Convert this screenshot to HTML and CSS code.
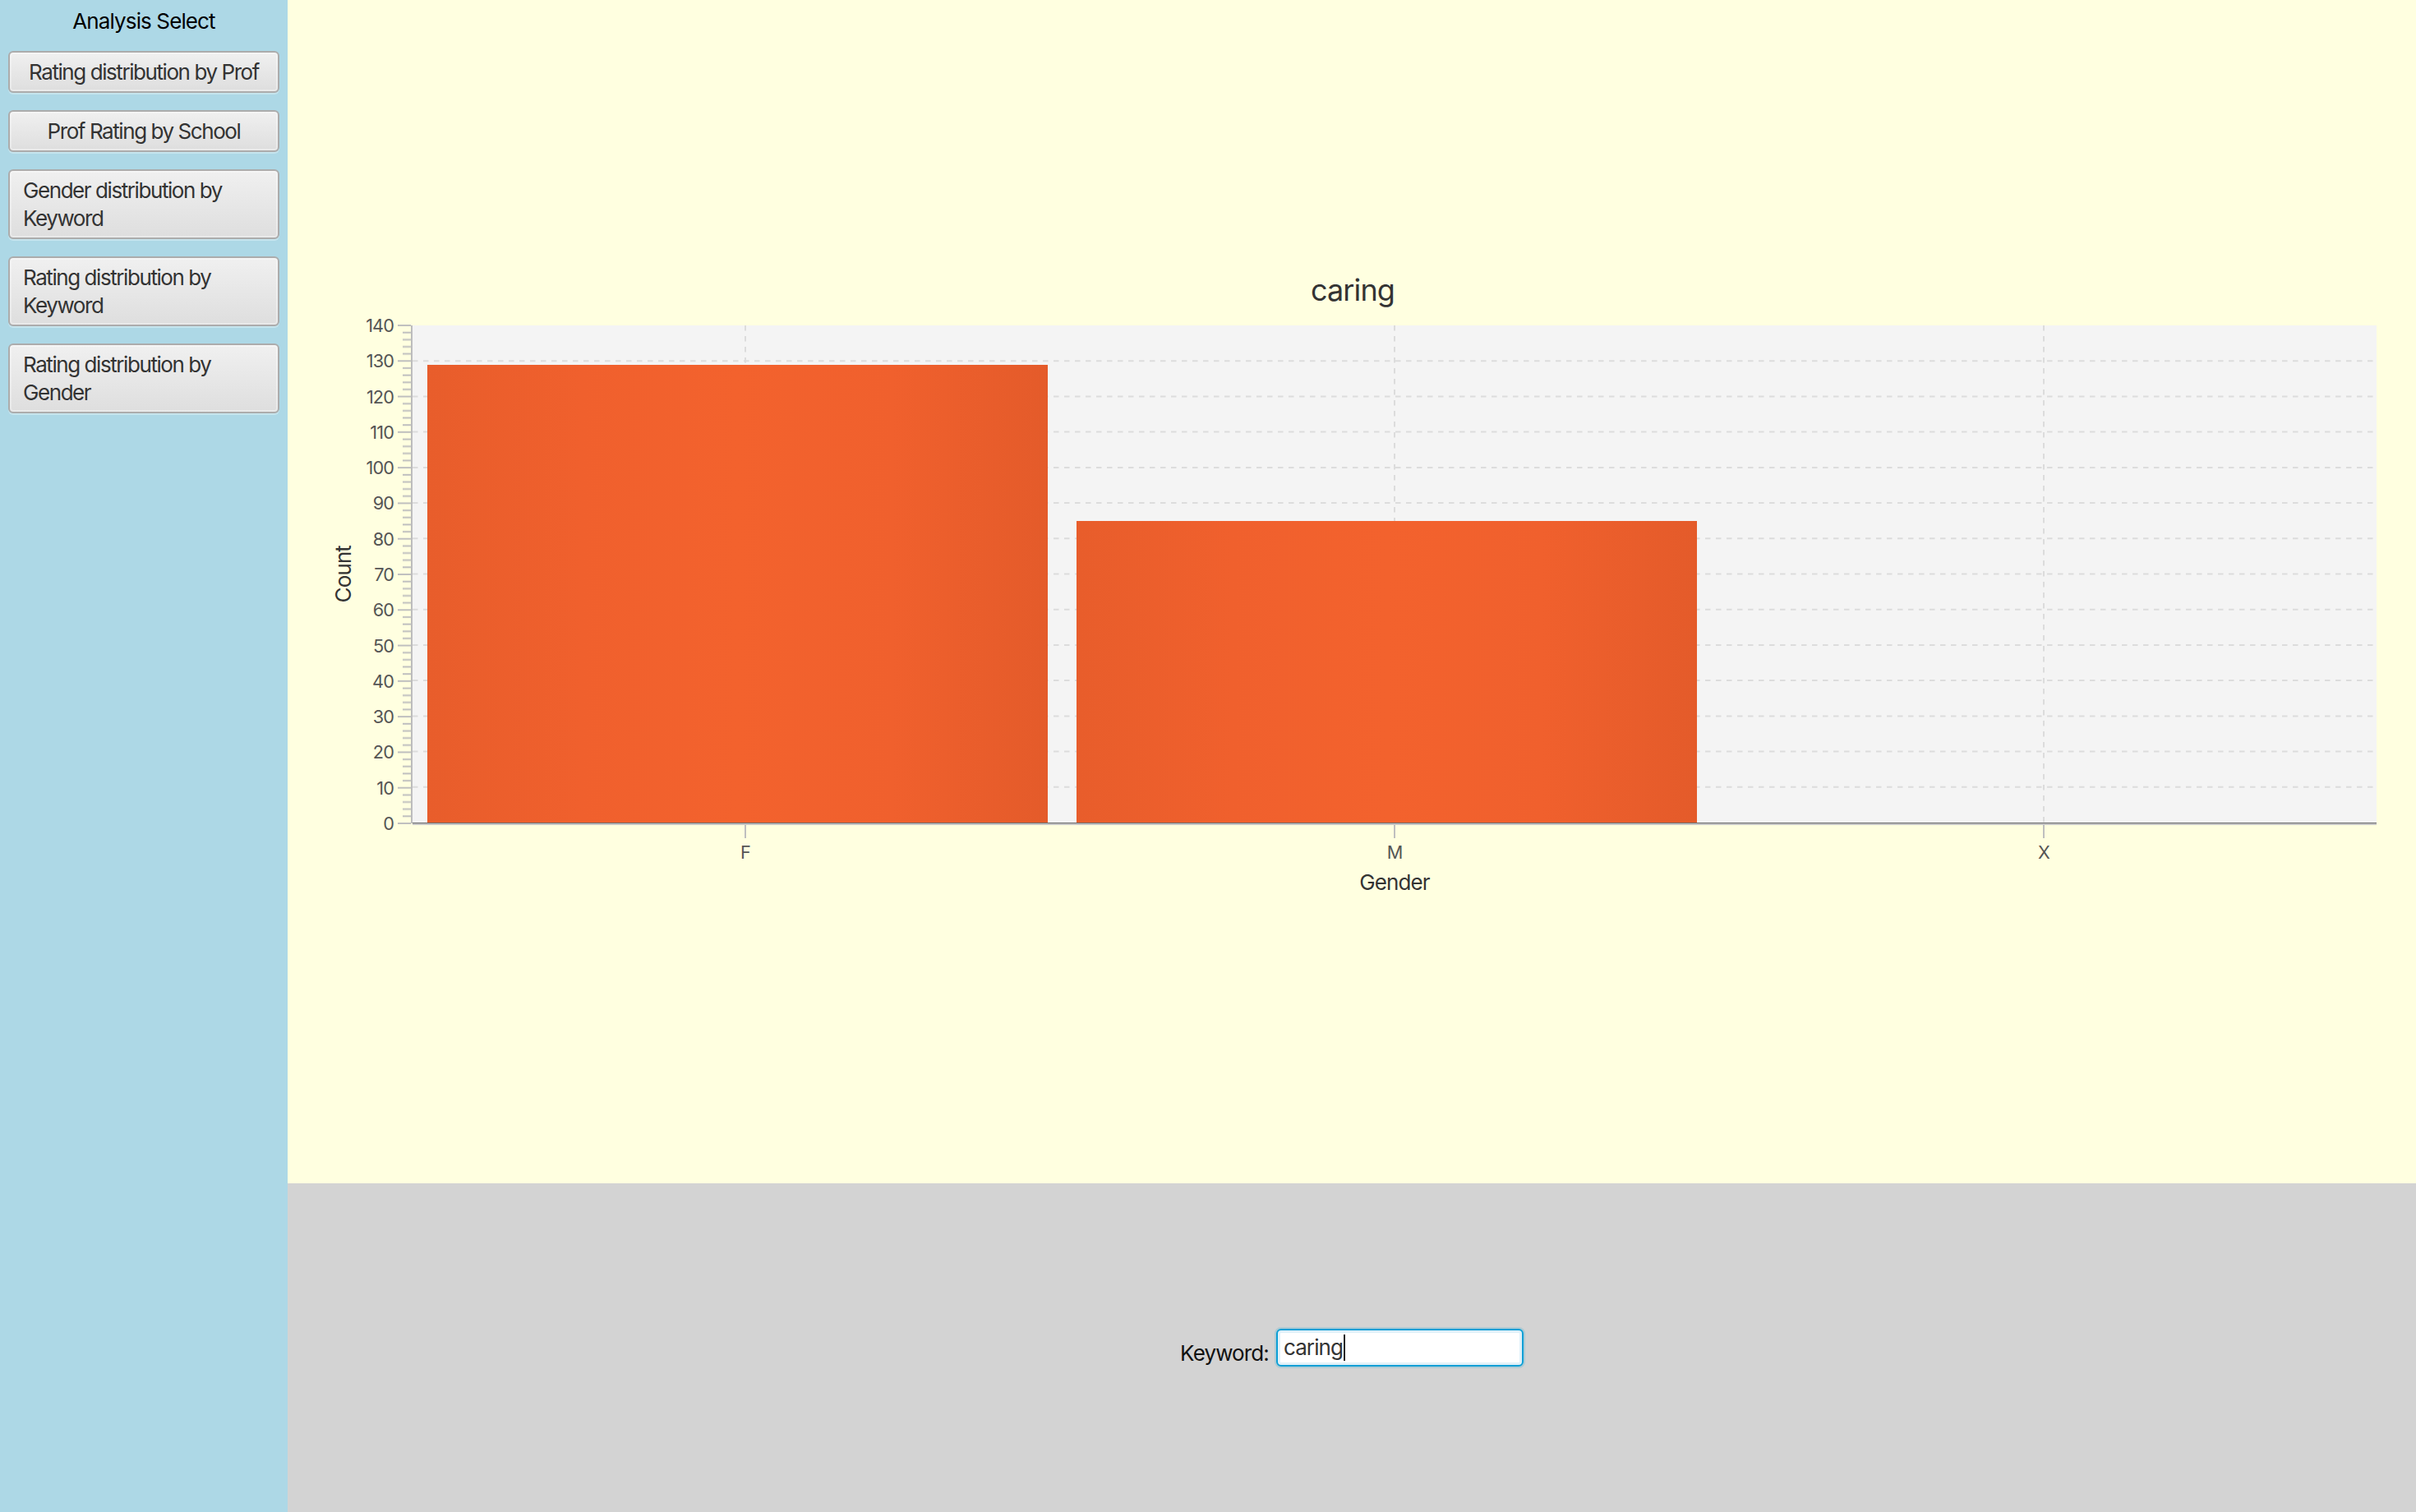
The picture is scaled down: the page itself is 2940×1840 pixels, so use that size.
FILE: index.html
```html
<!DOCTYPE html>
<html lang="en">
<head>
<meta charset="utf-8">
<title>Analysis</title>
<link rel="stylesheet" href="styles.css">
</head>
<body>
<div class="app">
  <aside class="sidebar">
    <div class="sidebar-title">Analysis Select</div>
    <button class="btn center">Rating distribution by Prof</button>
    <button class="btn center">Prof Rating by School</button>
    <button class="btn">Gender distribution by<br>Keyword</button>
    <button class="btn">Rating distribution by<br>Keyword</button>
    <button class="btn">Rating distribution by<br>Gender</button>
  </aside>

  <main class="chart-pane">
    <div class="chart">
      <div class="chart-title">caring</div>
      <div class="chart-body">
        <div class="y-title"><span>Count</span></div>
        <div class="y-labels">
          <span>140</span><span>130</span><span>120</span><span>110</span><span>100</span>
          <span>90</span><span>80</span><span>70</span><span>60</span><span>50</span>
          <span>40</span><span>30</span><span>20</span><span>10</span><span>0</span>
        </div>
        <svg class="y-ticks" viewBox="0 0 23 606" width="23" height="606">
          <defs>
            <pattern id="yt" patternUnits="userSpaceOnUse" x="0" y="-1" width="23" height="43.2857">
              <rect x="5" y="0" width="16" height="2" fill="#bfbfbf"/>
              <rect x="11" y="8.657" width="10" height="2" fill="#bfbfbf"/>
              <rect x="11" y="17.314" width="10" height="2" fill="#bfbfbf"/>
              <rect x="11" y="25.971" width="10" height="2" fill="#bfbfbf"/>
              <rect x="11" y="34.629" width="10" height="2" fill="#bfbfbf"/>
            </pattern>
          </defs>
          <rect x="0" y="-1" width="23" height="608" fill="url(#yt)"/>
          <rect x="21" y="0" width="2" height="606" fill="#bdbdbd"/>
        </svg>
        <div class="plot">
          <svg class="grid" viewBox="0 0 2390 605" preserveAspectRatio="none">
            <g stroke="#dcdcdc" stroke-width="2" stroke-dasharray="6.5 6.5" fill="none">
              <line x1="0" y1="561.8" x2="2390" y2="561.8"/>
              <line x1="0" y1="518.6" x2="2390" y2="518.6"/>
              <line x1="0" y1="475.4" x2="2390" y2="475.4"/>
              <line x1="0" y1="432.1" x2="2390" y2="432.1"/>
              <line x1="0" y1="388.9" x2="2390" y2="388.9"/>
              <line x1="0" y1="345.7" x2="2390" y2="345.7"/>
              <line x1="0" y1="302.5" x2="2390" y2="302.5"/>
              <line x1="0" y1="259.3" x2="2390" y2="259.3"/>
              <line x1="0" y1="216.1" x2="2390" y2="216.1"/>
              <line x1="0" y1="172.9" x2="2390" y2="172.9"/>
              <line x1="0" y1="129.6" x2="2390" y2="129.6"/>
              <line x1="0" y1="86.4" x2="2390" y2="86.4"/>
              <line x1="0" y1="43.2" x2="2390" y2="43.2"/>
              <line x1="405" y1="0" x2="405" y2="605"/>
              <line x1="1195" y1="0" x2="1195" y2="605"/>
              <line x1="1985" y1="0" x2="1985" y2="605"/>
            </g>
          </svg>
          <div class="bars">
            <div class="slot"><div class="bar" style="height:92.14%"></div></div>
            <div class="slot"><div class="bar" style="height:60.71%"></div></div>
            <div class="slot"></div>
          </div>
        </div>
        <div class="x-axis">
          <div class="x-cat">F</div>
          <div class="x-cat">M</div>
          <div class="x-cat">X</div>
        </div>
        <div class="x-title">Gender</div>
      </div>
    </div>
  </main>

  <section class="controls">
    <span class="kw-label">Keyword:</span>
    <div class="field"><span class="field-text">caring</span><span class="caret"></span></div>
  </section>
</div>
</body>
</html>
```

FILE: styles.css
```css
html, body {
  margin: 0;
  padding: 0;
}

body {
  width: 2940px;
  height: 1840px;
  overflow: hidden;
  font-family: Inter, "Noto Sans", "Liberation Sans", sans-serif;
  letter-spacing: -0.055em;
}

.app {
  display: grid;
  grid-template-columns: 350px 1fr;
  grid-template-rows: 1440px 400px;
  width: 2940px;
  height: 1840px;
}

/* ---------- sidebar ---------- */
.sidebar {
  grid-row: 1 / 3;
  grid-column: 1;
  background: #add8e6;
  padding: 11px 10px 0;
  display: flex;
  flex-direction: column;
  gap: 21px;
  box-sizing: border-box;
}

.sidebar-title {
  font-size: 26px;
  line-height: 30px;
  text-align: center;
  color: #000;
}

.btn {
  font-family: inherit;
  font-size: 26px;
  letter-spacing: -0.055em;
  line-height: 34px;
  color: #333;
  text-align: left;
  width: 100%;
  box-sizing: border-box;
  padding: 6.5px 16px;
  margin: 0;
  border: 2px solid #acacac;
  border-radius: 6px;
  background: linear-gradient(to bottom, #f0f0f0, #dedede);
  box-shadow: inset 0 0 0 2px rgba(255, 255, 255, 0.35), 0 2px 0 rgba(255, 255, 255, 0.3);
}

.btn.center {
  text-align: center;
  white-space: nowrap;
}

/* ---------- chart ---------- */
.chart-pane {
  grid-row: 1;
  grid-column: 2;
  background: #ffffe0;
  padding: 331px 48px 0 50px;
  box-sizing: border-box;
}

.chart-title {
  text-align: center;
  font-size: 36px;
  line-height: 44px;
  color: #333;
  margin-bottom: 21px;
}

.chart-body {
  display: grid;
  grid-template-columns: 36px 43px 23px 1fr;
  grid-template-rows: 606px auto auto;
}

.y-title {
  grid-row: 1;
  grid-column: 1;
  display: flex;
  align-items: center;
  justify-content: center;
}

.y-title span {
  writing-mode: vertical-rl;
  transform: rotate(180deg);
  font-size: 26px;
  line-height: 30px;
  color: #333;
}

.y-labels {
  grid-row: 1;
  grid-column: 2;
  display: flex;
  flex-direction: column;
  justify-content: space-between;
  margin: -13px 0;
  text-align: right;
  font-size: 21.7px;
  line-height: 26px;
  color: #555;
}

.y-ticks {
  grid-row: 1;
  grid-column: 3;
  display: block;
  overflow: visible;
}

.plot {
  grid-row: 1;
  grid-column: 4;
  position: relative;
  background: #f4f4f4;
  border-bottom: 1px solid #6e6e6e;
  box-sizing: border-box;
}

.grid {
  position: absolute;
  left: 0;
  top: 0;
  width: 100%;
  height: 100%;
}

.bars {
  position: relative;
  display: flex;
  height: 100%;
  padding: 0 10px;
  box-sizing: border-box;
}

.slot {
  flex: 1;
  display: flex;
  align-items: flex-end;
  padding-left: 8px;
}

.bar {
  width: 755px;
  background: linear-gradient(to right, #e85d2b 0%, #f0602d 25%, #f3622d 50%, #f0602d 75%, #e45b2a 100%);
}

.x-axis {
  grid-row: 2;
  grid-column: 4;
  display: flex;
  padding: 0 10px;
  border-top: 2px solid #c4c4c4;
}

.x-cat {
  flex: 1;
  text-align: center;
  font-size: 21.7px;
  line-height: 26px;
  color: #555;
  padding-top: 20px;
  background: linear-gradient(#bfbfbf, #bfbfbf) center top / 2px 16px no-repeat;
}

.x-title {
  grid-row: 3;
  grid-column: 4;
  text-align: center;
  font-size: 26px;
  line-height: 30px;
  color: #333;
  margin-top: 9px;
}

/* ---------- controls ---------- */
.controls {
  grid-row: 2;
  grid-column: 2;
  background: #d3d3d3;
  display: flex;
  align-items: center;
  justify-content: center;
  gap: 9px;
}

.kw-label {
  font-size: 26px;
  line-height: 30px;
  color: #111;
  margin-top: 14px;
}

.field {
  width: 301px;
  height: 46px;
  box-sizing: border-box;
  border: 2px solid #0a9fd6;
  border-radius: 6px;
  background: #fff;
  box-shadow: inset 0 0 0 3px #e0f1f9, 0 0 0 2px rgba(3, 158, 211, 0.18);
  display: flex;
  align-items: center;
  padding: 0 7px;
  font-size: 26px;
  line-height: 30px;
  color: #333;
}

.caret {
  width: 2px;
  height: 32px;
  background: #222;
  margin-left: 1px;
}
```
